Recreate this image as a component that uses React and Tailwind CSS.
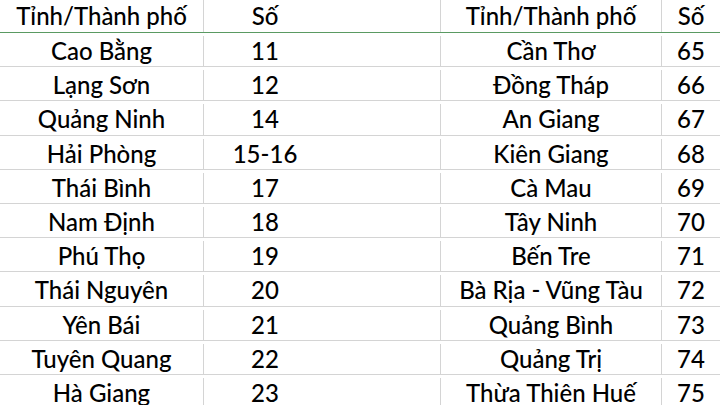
const rows = [
  ['Cao Bằng', '11', 'Cần Thơ', '65'],
  ['Lạng Sơn', '12', 'Đồng Tháp', '66'],
  ['Quảng Ninh', '14', 'An Giang', '67'],
  ['Hải Phòng', '15-16', 'Kiên Giang', '68'],
  ['Thái Bình', '17', 'Cà Mau', '69'],
  ['Nam Định', '18', 'Tây Ninh', '70'],
  ['Phú Thọ', '19', 'Bến Tre', '71'],
  ['Thái Nguyên', '20', 'Bà Rịa - Vũng Tàu', '72'],
  ['Yên Bái', '21', 'Quảng Bình', '73'],
  ['Tuyên Quang', '22', 'Quảng Trị', '74'],
  ['Hà Giang', '23', 'Thừa Thiên Huế', '75'],
];

const Row = ({ cells, header }) => (
  <div
    className={`grid grid-cols-[204px_122px_115px_221px_58px] shrink-0 border-b ${
      header ? 'h-[33px] border-[#5a9a62]' : 'h-[34.2px] pt-[3px] border-[#d4d4d4]'
    }`}
  >
    <div className="flex items-center justify-center border-r border-[#d4d4d4]">{cells[0]}</div>
    <div className="flex items-center justify-center">{cells[1]}</div>
    <div className="border-r border-[#d4d4d4]" />
    <div className="flex items-center justify-center border-r border-[#d4d4d4]">{cells[2]}</div>
    <div className="flex items-center justify-center">{cells[3]}</div>
  </div>
);

export default function App() {
  return (
    <div
      className="w-[720px] h-[405px] overflow-hidden bg-white text-black text-[24px] font-medium leading-none flex flex-col"
      style={{ fontFamily: 'Lato, "Noto Sans", sans-serif' }}
    >
      <Row header cells={['Tỉnh/Thành phố', 'Số', 'Tỉnh/Thành phố', 'Số']} />
      {rows.map((r) => (
        <Row key={r[0]} cells={r} />
      ))}
    </div>
  );
}
